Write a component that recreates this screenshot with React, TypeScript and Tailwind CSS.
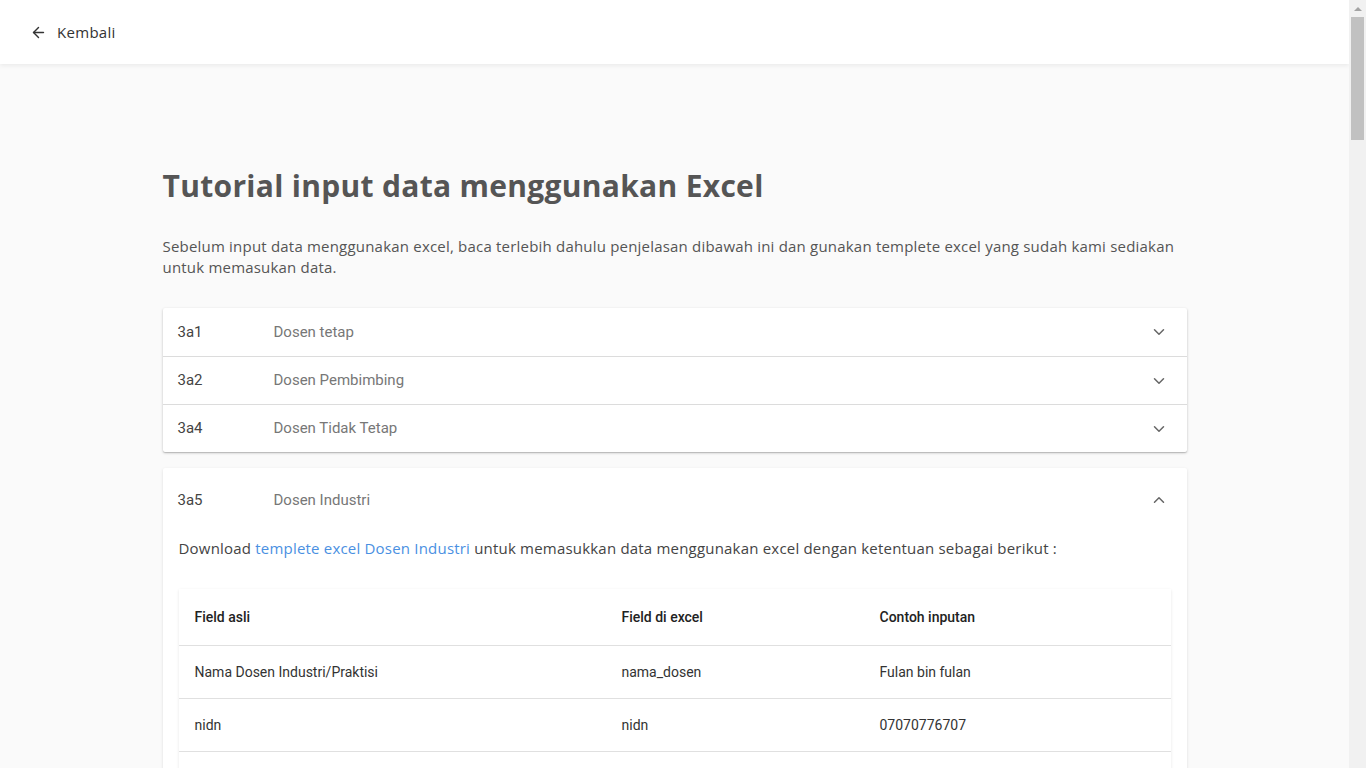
import React from "react";
import { ArrowLeft, ChevronDown, ChevronUp } from "lucide-react";

const collapsed = [
  { code: "3a1", name: "Dosen tetap" },
  { code: "3a2", name: "Dosen Pembimbing" },
  { code: "3a4", name: "Dosen Tidak Tetap" },
];

const rows = [
  ["Nama Dosen Industri/Praktisi", "nama_dosen", "Fulan bin fulan"],
  ["nidn", "nidn", "07070776707"],
];

const poppins = { fontFamily: "'Open Sans', 'Noto Sans', sans-serif" };
const roboto = { fontFamily: "Roboto, 'Noto Sans', sans-serif" };

export default function App() {
  return (
    <div className="h-screen flex overflow-hidden bg-[#fafafa]">
      <div className="flex-1 min-w-0 overflow-hidden">
        {/* Top bar */}
        <header className="h-16 bg-white shadow-[0_2px_4px_rgba(0,0,0,0.06)] flex items-center px-[30px] relative z-10">
          <button className="flex items-center gap-[10px] text-[#333]" style={poppins}>
            <ArrowLeft className="w-[17px] h-[17px]" strokeWidth={2} />
            <span className="text-[15px] tracking-[0.3px]">Kembali</span>
          </button>
        </header>

        <main className="max-w-[1024px] mx-auto pt-[100px] pb-24">
          <h1 className="text-[30px] font-bold text-[#555] leading-[44px] tracking-[0.3px]" style={poppins}>
            Tutorial input data menggunakan Excel
          </h1>
          <p className="mt-[28px] text-[15px] leading-[21px] tracking-[0.2px] text-[#555]" style={poppins}>
            Sebelum input data menggunakan excel, baca terlebih dahulu penjelasan dibawah ini dan gunakan templete excel yang sudah kami sediakan untuk memasukan data.
          </p>

          {/* Collapsed accordion group */}
          <div className="mt-[30px] bg-white shadow-[0_1px_3px_rgba(0,0,0,0.2),0_1px_1px_rgba(0,0,0,0.14)] rounded-[2px]" style={roboto}>
            {collapsed.map((item, i) => (
              <div
                key={item.code}
                className={`h-12 flex items-center px-[15px] ${i > 0 ? "border-t border-[#dcdcdc]" : ""}`}
              >
                <span className="w-[96px] text-[15px] text-[#444]">{item.code}</span>
                <span className="flex-1 text-[15px] text-[#777]">{item.name}</span>
                <ChevronDown className="w-[18px] h-[18px] text-[#666] mr-[4px]" strokeWidth={2} />
              </div>
            ))}
          </div>

          {/* Expanded accordion */}
          <div className="mt-4 bg-white shadow-[0_1px_3px_rgba(0,0,0,0.12)] rounded-[2px] pb-6">
            <div className="h-16 flex items-center px-[15px]" style={roboto}>
              <span className="w-[96px] text-[15px] text-[#444]">3a5</span>
              <span className="flex-1 text-[15px] text-[#777]">Dosen Industri</span>
              <ChevronUp className="w-[18px] h-[18px] text-[#666] mr-[4px]" strokeWidth={2} />
            </div>
            <div className="px-4">
              <p className="text-[15px] text-[#444] leading-[21px] tracking-[0.2px] pt-[6px]" style={poppins}>
                Download{" "}
                <a className="text-[#4a90e2] font-medium">templete excel Dosen Industri</a>{" "}
                untuk memasukkan data menggunakan excel dengan ketentuan sebagai berikut :
              </p>

              <div className="mt-[30px] bg-white shadow-[0_1px_3px_rgba(0,0,0,0.1)]" style={roboto}>
                <div className="grid grid-cols-[427px_258px_1fr] h-14 items-center px-4 text-[14px] font-medium text-[#222]">
                  <span>Field asli</span>
                  <span>Field di excel</span>
                  <span>Contoh inputan</span>
                </div>
                {rows.map((r) => (
                  <div
                    key={r[0]}
                    className="grid grid-cols-[427px_258px_1fr] h-[53px] items-center px-4 text-[14px] text-[#333] border-t border-[#e0e0e0]"
                  >
                    <span>{r[0]}</span>
                    <span>{r[1]}</span>
                    <span>{r[2]}</span>
                  </div>
                ))}
                <div className="h-[53px] border-t border-[#e0e0e0]" />
              </div>
            </div>
          </div>
        </main>
      </div>

      {/* Window scrollbar */}
      <div className="w-[17px] shrink-0 bg-[#f1f1f1] flex flex-col items-center">
        <div className="h-[17px] w-full flex items-center justify-center">
          <div className="w-0 h-0 border-l-[4px] border-r-[4px] border-b-[4px] border-l-transparent border-r-transparent border-b-[#a3a3a3]" />
        </div>
        <div className="w-[13px] h-[123px] bg-[#c1c1c1]" />
      </div>
    </div>
  );
}
